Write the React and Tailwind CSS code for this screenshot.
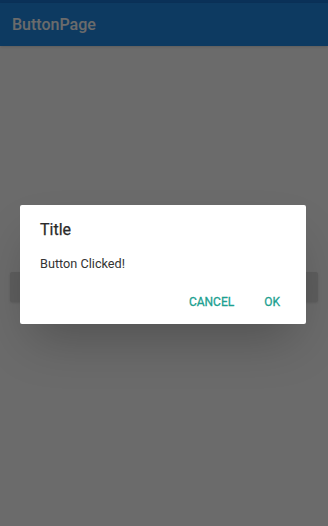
export default function App() {
  return (
    <div
      className="relative h-[526px] w-[328px] overflow-hidden bg-white"
      style={{ fontFamily: "Roboto, 'Noto Sans', sans-serif" }}
    >
      {/* app bar */}
      <div className="h-[3px] bg-[#1976d2]" />
      <div className="flex h-[43px] items-center bg-[#1f8be6] px-3 shadow">
        <span className="text-[16px] font-medium leading-[20px] text-white">ButtonPage</span>
      </div>

      {/* page body */}
      <div className="px-[10px] pt-[226px]">
        <div className="h-[30px] rounded-[2px] bg-[#e0e0e0] shadow" />
      </div>

      {/* scrim */}
      <div className="absolute inset-0 flex items-center justify-center bg-black/[0.58]">
        <div className="mr-[2px] mt-[3px] w-[286px] rounded-[2px] bg-white shadow-2xl">
          <div className="px-5 pt-[15px] text-[16px] font-normal leading-[20px] text-[#2a2a2a] [-webkit-text-stroke:0.25px_#2a2a2a]">
            Title
          </div>
          <div className="px-5 pt-[16px] text-[12.7px] leading-[16px] text-[#333]">Button Clicked!</div>
          <div className="flex justify-end gap-[14px] pb-[8px] pr-[18px] pt-[16px]">
            <button className="h-[28px] px-[8px] text-[12px] font-normal leading-[14px] text-[#20a090] [-webkit-text-stroke:0.28px_#20a090]">
              CANCEL
            </button>
            <button className="h-[28px] px-[8px] text-[12px] font-normal leading-[14px] text-[#20a090] [-webkit-text-stroke:0.28px_#20a090]">
              OK
            </button>
          </div>
        </div>
      </div>
    </div>
  );
}
